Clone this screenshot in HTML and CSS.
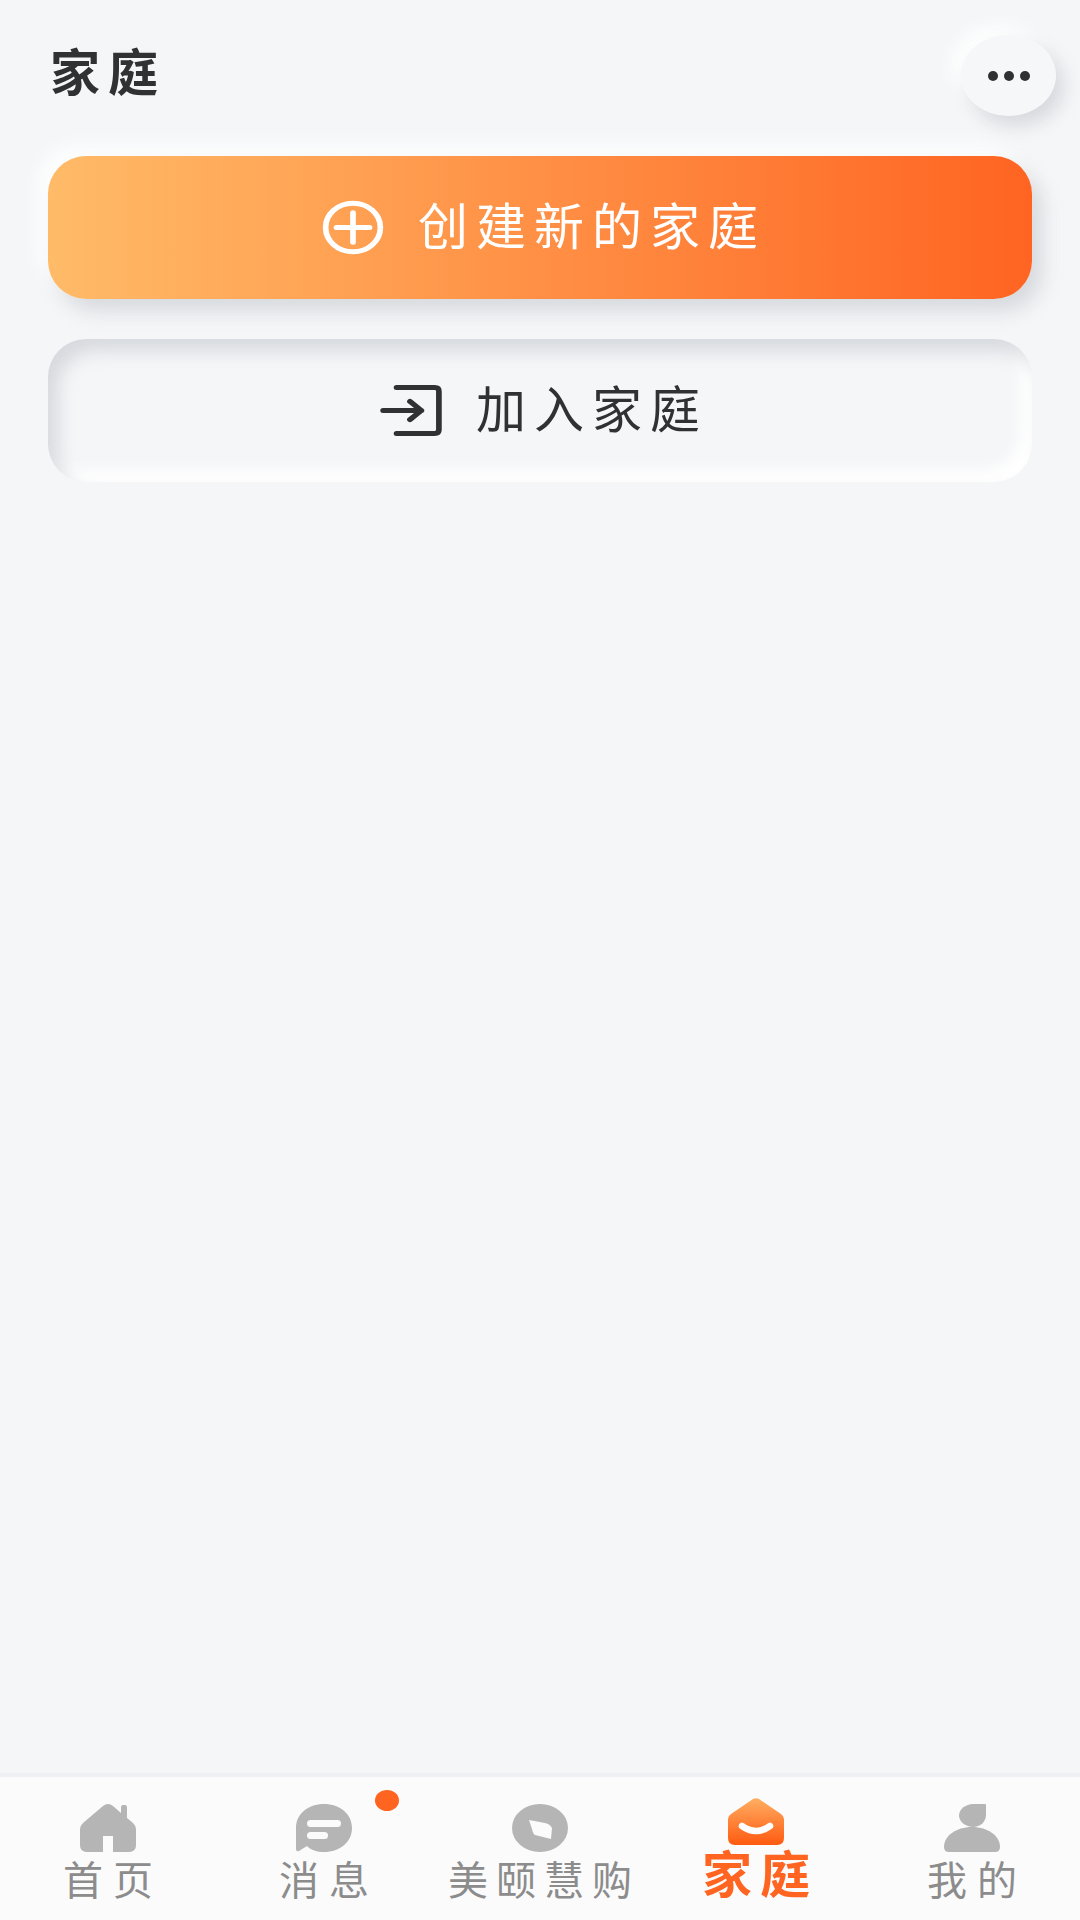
FILE: index.html
```html
<!DOCTYPE html>
<html lang="zh">
<head>
<meta charset="utf-8">
<title>家庭</title>
<link rel="stylesheet" href="styles.css">
</head>
<body>
<div class="page">
  <header class="header">
    <h1 class="title">家庭</h1>
    <button class="more"><span class="dot"></span><span class="dot"></span><span class="dot"></span></button>
  </header>
  <main class="actions">
    <button class="action action-create">
      <svg class="action-icon" viewBox="0 0 60 60" preserveAspectRatio="none"><circle cx="30" cy="30" r="26.500" fill="none" stroke="#fff" stroke-width="5.500"/><path d="M14 30H46M30 14V46" fill="none" stroke="#fff" stroke-width="5.500" stroke-linecap="round"/></svg>
      <span class="action-label">创建新的家庭</span>
    </button>
    <button class="action action-join">
      <svg class="action-icon" viewBox="0 0 60 60" preserveAspectRatio="none"><path d="M16 5H53Q57 5 57 9V51Q57 55 53 55H16" fill="none" stroke="#303133" stroke-width="5.500" stroke-linecap="round"/><path d="M3 30H40M29 20L40 30L29 40" fill="none" stroke="#303133" stroke-width="5.500" stroke-linecap="round" stroke-linejoin="round"/></svg>
      <span class="action-label">加入家庭</span>
    </button>
  </main>
  <nav class="tabbar">
    <div class="tab">
      <svg class="tab-icon" viewBox="0 0 56 48"><path d="M28 0Q30.500 0 33 2L41 9V4Q41 1 43 1H45Q47 1 47 4V14L53 19Q56 22 56 25V41Q56 48 49 48H33V32H23V48H7Q0 48 0 41V25Q0 22 3 19L23 2Q25.500 0 28 0Z" fill="#b5b5b5"/></svg>
      <span class="tab-label">首页</span>
    </div>
    <div class="tab">
      <svg class="tab-icon" viewBox="0 0 56 48"><path d="M28 0C44 0 56 10 56 24S44 48 28 48C21 48 15 46 11 42L3 47Q0 48 0 45V24C0 10 12 0 28 0Z" fill="#b5b5b5"/><rect x="11" y="16" width="34" height="7" rx="3.500" fill="#fbfbfc"/><rect x="11" y="28" width="21" height="7" rx="3.500" fill="#fbfbfc"/></svg>
      <span class="tab-label">消息</span>
      <span class="badge"></span>
    </div>
    <div class="tab">
      <svg class="tab-icon" viewBox="0 0 56 48"><ellipse cx="28" cy="24" rx="28" ry="24" fill="#b5b5b5"/><path d="M17 16L33 19Q38 20 40 24L39 35L23 31Q21 30 20 25Z" fill="#fbfbfc"/></svg>
      <span class="tab-label tab-label-wide">美颐慧购</span>
    </div>
    <div class="tab">
      <svg class="tab-icon tab-icon-active" viewBox="0 0 56 47"><defs><linearGradient id="homeGrad" x1="0" y1="0" x2="0" y2="1"><stop offset="0" stop-color="#ffae62"/><stop offset="1" stop-color="#ff5a10"/></linearGradient></defs><path d="M25 1Q28 -0.500 31 1L53 16Q56 18 56 21V40Q56 47 49 47H7Q0 47 0 40V21Q0 18 3 16Z" fill="url(#homeGrad)"/><path d="M14 28Q28 38 42 28" fill="none" stroke="#fff" stroke-width="6.500" stroke-linecap="round"/></svg>
      <span class="tab-label tab-label-active">家庭</span>
    </div>
    <div class="tab">
      <svg class="tab-icon" viewBox="0 0 56 48"><path d="M29 0H41Q42 0 42 1V11C42 18 36 23 29 23S15 18 15 11.500 22 0 29 0Z" fill="#b5b5b5"/><path d="M28 23C44 23 56 32 56 43Q56 48 51 48H5Q0 48 0 43C0 32 12 23 28 23Z" fill="#b5b5b5"/></svg>
      <span class="tab-label">我的</span>
    </div>
  </nav>
</div>
</body>
</html>
```

FILE: styles.css
```css
* {
  box-sizing: border-box;
}

html,
body {
  margin: 0;
  padding: 0;
}

body {
  background: #f5f6f8;
  font-family: "Noto Sans CJK SC", "Noto Sans", sans-serif;
}

.page {
  width: 1080px;
  height: 1920px;
  display: flex;
  flex-direction: column;
  overflow: hidden;
}

.header {
  height: 156px;
  padding: 35px 24px 0 50px;
  display: flex;
  justify-content: space-between;
  align-items: flex-start;
}

.title {
  margin: 4px 0 0;
  font-size: 50px;
  line-height: 60px;
  font-weight: 700;
  letter-spacing: 8px;
  color: #303133;
}

.more {
  width: 95px;
  height: 81px;
  padding: 0;
  border: 0;
  border-radius: 50%;
  background: #f6f7f9;
  display: flex;
  align-items: center;
  justify-content: center;
  gap: 6px;
  box-shadow: 8px 10px 18px rgba(170, 176, 182, 0.4), -10px -10px 18px rgba(255, 255, 255, 0.9);
}

.dot {
  width: 10px;
  height: 10px;
  border-radius: 50%;
  background: #303133;
}

.actions {
  padding: 0 48px;
  display: flex;
  flex-direction: column;
  gap: 40px;
}

.action {
  height: 143px;
  padding: 0;
  border: 0;
  border-radius: 38px;
  display: flex;
  align-items: center;
  justify-content: center;
  gap: 34px;
  font-family: inherit;
  font-size: 50px;
  line-height: 60px;
  letter-spacing: 8px;
}

.action-label {
  margin-right: -8px;
  padding-bottom: 10px;
}

.action-create {
  color: #fff;
  background: linear-gradient(90deg, #ffbb68 0%, #ff6422 100%);
  box-shadow: 10px 12px 20px rgba(170, 176, 182, 0.4), -10px -10px 20px rgba(255, 255, 255, 0.95);
}

.action-join {
  color: #303133;
  background: #f5f6f8;
  box-shadow: inset 10px 12px 18px rgba(170, 176, 182, 0.4), inset -12px -12px 14px rgba(255, 255, 255, 0.95);
}

.action-icon {
  width: 62px;
  height: 55px;
  flex: none;
}

.tabbar {
  margin-top: auto;
  height: 147px;
  padding-top: 27px;
  border-top: 4px solid #eef0f3;
  background: #fbfbfc;
  display: grid;
  grid-template-columns: repeat(5, 216px);
}

.tab {
  position: relative;
  height: 94px;
  display: flex;
  flex-direction: column;
  align-items: center;
}

.tab-icon {
  width: 56px;
  height: 48px;
  flex: none;
}

.tab-icon-active {
  height: 47px;
  margin-top: -6px;
}

.tab-label {
  margin-top: 7px;
  margin-right: -10px;
  font-size: 40px;
  line-height: 38px;
  letter-spacing: 10px;
  color: #8c8c8c;
  white-space: nowrap;
}

.tab-label-wide {
  margin-right: -8px;
  letter-spacing: 8px;
}

.tab-label-active {
  margin-top: 3px;
  margin-right: -8px;
  font-size: 50px;
  line-height: 46px;
  font-weight: 700;
  letter-spacing: 8px;
  color: #ff6420;
}

.badge {
  position: absolute;
  left: 159px;
  top: -14px;
  width: 24px;
  height: 21px;
  border-radius: 50%;
  background: #ff6420;
}
```
